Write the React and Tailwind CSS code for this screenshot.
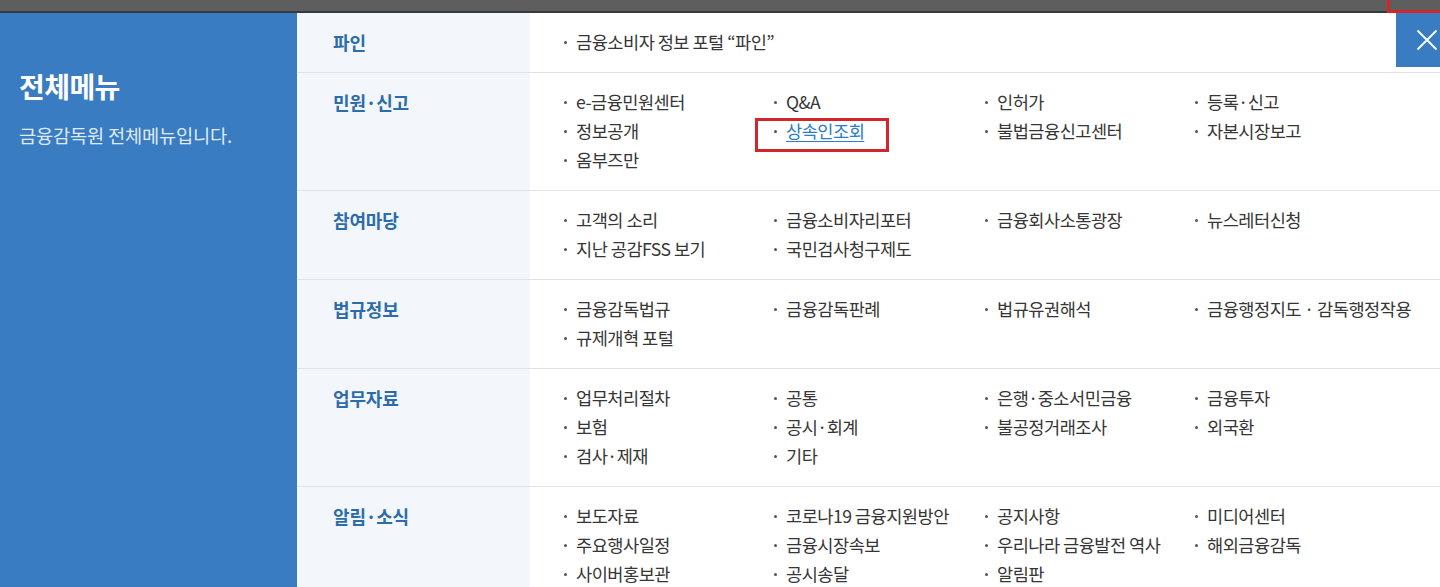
import React from "react";

const FONT = { fontFamily: '"Noto Sans CJK KR", "Noto Sans", sans-serif' };

const rows = [
  { title: "파인", items: ["금융소비자 정보 포털 “파인”"], wide: true },
  {
    title: "민원·신고",
    items: ["e-금융민원센터", "Q&A", "인허가", "등록·신고", "정보공개", "상속인조회", "불법금융신고센터", "자본시장보고", "옴부즈만"],
  },
  {
    title: "참여마당",
    items: ["고객의 소리", "금융소비자리포터", "금융회사소통광장", "뉴스레터신청", "지난 공감FSS 보기", "국민검사청구제도"],
  },
  {
    title: "법규정보",
    items: ["금융감독법규", "금융감독판례", "법규유권해석", "금융행정지도 · 감독행정작용", "규제개혁 포털"],
  },
  {
    title: "업무자료",
    items: ["업무처리절차", "공통", "은행·중소서민금융", "금융투자", "보험", "공시·회계", "불공정거래조사", "외국환", "검사·제재", "기타"],
  },
  {
    title: "알림·소식",
    items: ["보도자료", "코로나19 금융지원방안", "공지사항", "미디어센터", "주요행사일정", "금융시장속보", "우리나라 금융발전 역사", "해외금융감독", "사이버홍보관", "공시송달", "알림판"],
  },
];

function Item({ text }) {
  const hl = text === "상속인조회";
  return (
    <div className="relative flex items-center h-[29px] whitespace-nowrap">
      <span className="w-[3px] h-[3px] rounded-full bg-[#555] ml-[2px] mr-[9px] shrink-0" />
      {hl ? (
        <>
          <span className="text-[#2b7ccb] underline underline-offset-[3px]">{text}</span>
          <span className="absolute left-[-17px] top-[1px] w-[134px] h-[34px] border-[3px] border-[#d3262b]" />
        </>
      ) : (
        <span>{text}</span>
      )}
    </div>
  );
}

export default function App() {
  return (
    <div className="relative w-[1440px] h-[587px] overflow-hidden bg-white" style={FONT}>
      <div className="h-[13px] bg-[#5e5e5e] border-b-2 border-[#36393d]" />
      <div className="absolute left-[1387px] top-[-12px] w-[80px] h-[25px] border-[3px] border-[#d3262b]" />
      <div className="flex">
        <div className="w-[297px] shrink-0 bg-[#3a7cc1] h-[600px] pl-[19px] pt-[54px]">
          <div className="text-[28px] leading-[38px] font-bold text-white tracking-[-0.02em]">전체메뉴</div>
          <div className="mt-[17px] text-[18.7px] leading-[26px] text-[#dfeaf6] tracking-[-0.01em]">금융감독원 전체메뉴입니다.</div>
        </div>
        <div className="flex-1">
          {rows.map((r) => (
            <div key={r.title} className="flex border-b border-[#dfe4ea]">
              <div className="w-[233px] shrink-0 bg-[#f3f7fb] pl-[36px] pt-[15px] pb-[15px] text-[18px] leading-[29px] font-bold text-[#2c6cab] tracking-[-0.01em]">
                {r.title}
              </div>
              <div className="flex-1 pl-[32px] pt-[15px] pb-[15px] text-[17.6px] text-[#363636] tracking-[-0.03em]">
                {r.wide ? (
                  <Item text={r.items[0]} />
                ) : (
                  <div className="grid grid-cols-[210px_211px_210px_1fr]">
                    {r.items.map((t) => (
                      <Item key={t} text={t} />
                    ))}
                  </div>
                )}
              </div>
            </div>
          ))}
        </div>
      </div>
      <button className="absolute left-[1396px] top-[13px] w-[60px] h-[54px] bg-[#3a7cc1] flex items-center justify-center">
        <svg width="22" height="22" viewBox="0 0 22 22" className="ml-[2px]">
          <path d="M1.5 1.5 L20.5 20.5 M20.5 1.5 L1.5 20.5" stroke="white" strokeWidth="1.8" fill="none" />
        </svg>
      </button>
    </div>
  );
}
